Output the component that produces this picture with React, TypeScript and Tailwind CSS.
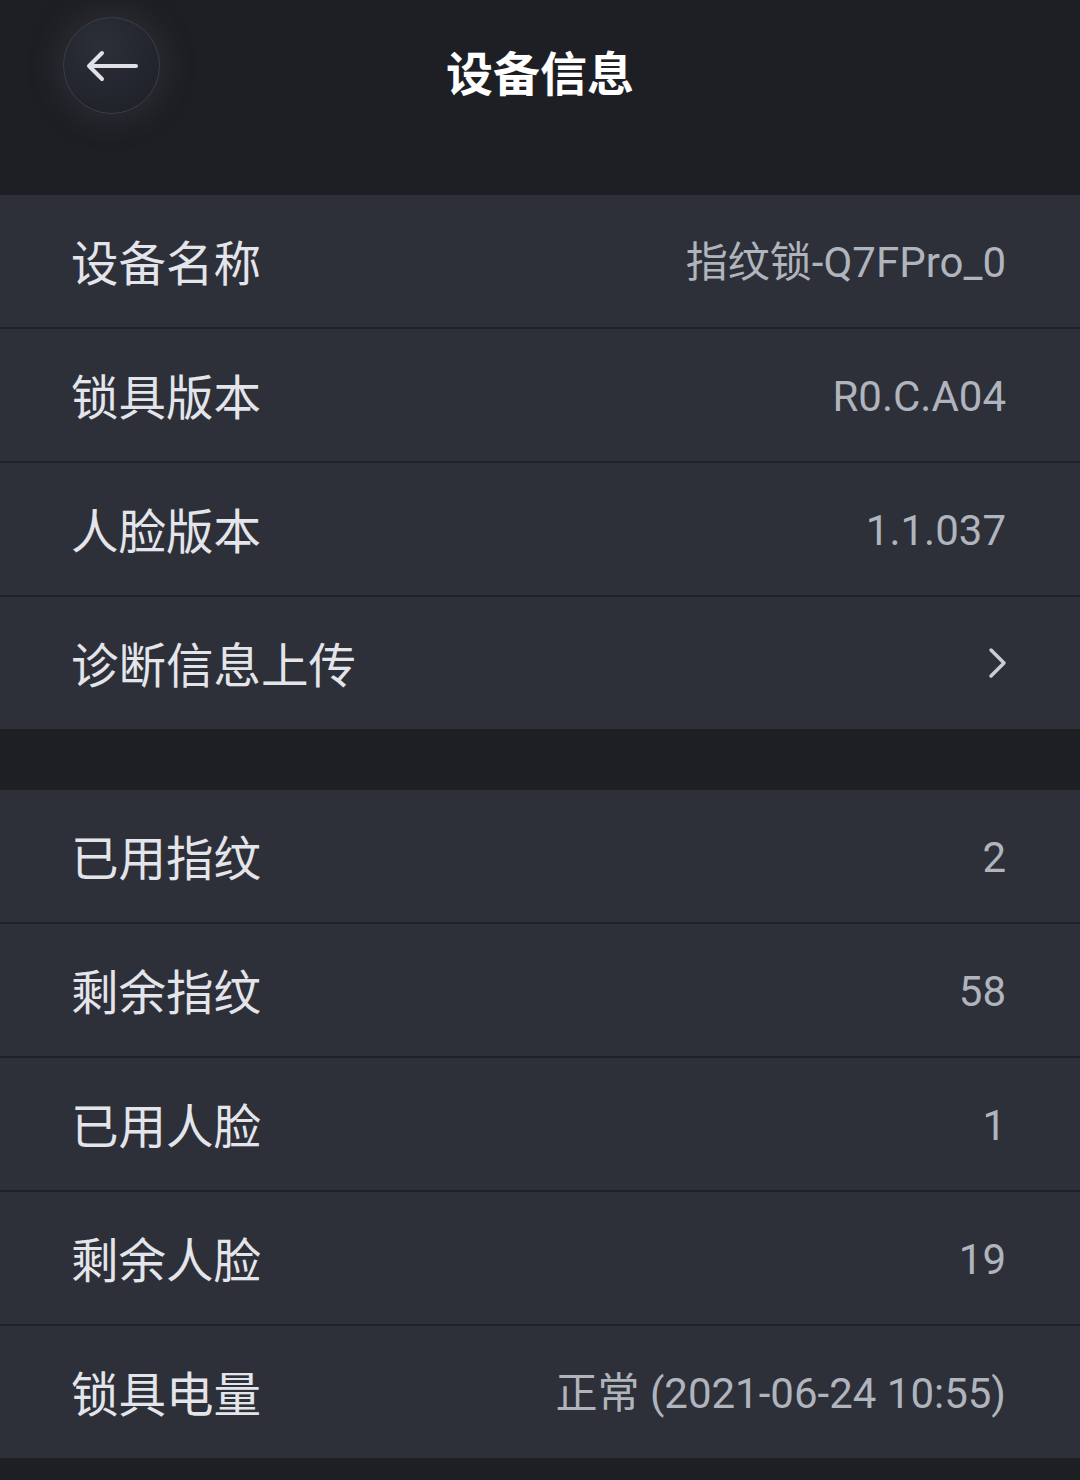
import React from "react";

const font = { fontFamily: '"Noto Sans CJK SC", "Noto Sans", sans-serif' };

type Row = { label: string; value?: string; chevron?: boolean };

const group1: Row[] = [
  { label: "设备名称", value: "指纹锁-Q7FPro_0" },
  { label: "锁具版本", value: "R0.C.A04" },
  { label: "人脸版本", value: "1.1.037" },
  { label: "诊断信息上传", chevron: true },
];

const group2: Row[] = [
  { label: "已用指纹", value: "2" },
  { label: "剩余指纹", value: "58" },
  { label: "已用人脸", value: "1" },
  { label: "剩余人脸", value: "19" },
  { label: "锁具电量", value: "正常 (2021-06-24 10:55)" },
];

function Group({ rows }: { rows: Row[] }) {
  return (
    <div className="flex flex-col gap-[2px] bg-[#1f2126]">
      {rows.map((r) => (
        <div
          key={r.label}
          className="h-[132px] bg-[#2d3039] flex items-center justify-between pl-[71px] pr-[74px]"
        >
          <span className="text-[47.5px] leading-none text-[#e3e5eb] font-['Noto_Sans_CJK_SC',sans-serif]">
            {r.label}
          </span>
          {r.value && (
            <span className="text-[42px] leading-none text-[#b0b4bd] mt-[3px] font-['Roboto','Noto_Sans_CJK_SC',sans-serif]">
              {r.value}
            </span>
          )}
          {r.chevron && (
            <svg width="22" height="34" viewBox="0 0 22 34" className="mr-[-2px]">
              <path
                d="M5 4 L18 17 L5 30"
                fill="none"
                stroke="#c9ccd3"
                strokeWidth="3.5"
                strokeLinecap="round"
                strokeLinejoin="round"
              />
            </svg>
          )}
        </div>
      ))}
    </div>
  );
}

export default function App() {
  return (
    <div className="w-[1080px] h-[1480px] bg-[#1e1f23] overflow-hidden" style={font}>
      <div className="h-[195px] bg-[#1e1f24]">
        <div className="relative h-[136px] flex items-center justify-center">
          <div className="absolute left-[63px] top-[17px] w-[97px] h-[97px] rounded-full bg-[radial-gradient(circle_at_40%_30%,#2b2f38,#1d1f26)] border border-[#3a3f4c] shadow-[0_0_28px_6px_rgba(70,72,80,0.35)] flex items-center justify-center">
            <svg width="56" height="34" viewBox="0 0 56 34">
              <path
                d="M52 17 H6 M18 4 L5 17 L18 30"
                fill="none"
                stroke="#dfe1e7"
                strokeWidth="4"
                strokeLinecap="round"
                strokeLinejoin="round"
              />
            </svg>
          </div>
          <span className="text-[47px] font-bold text-white leading-none mt-[4px]">设备信息</span>
        </div>
      </div>
      <Group rows={group1} />
      <div className="h-[61px]" />
      <Group rows={group2} />
    </div>
  );
}
